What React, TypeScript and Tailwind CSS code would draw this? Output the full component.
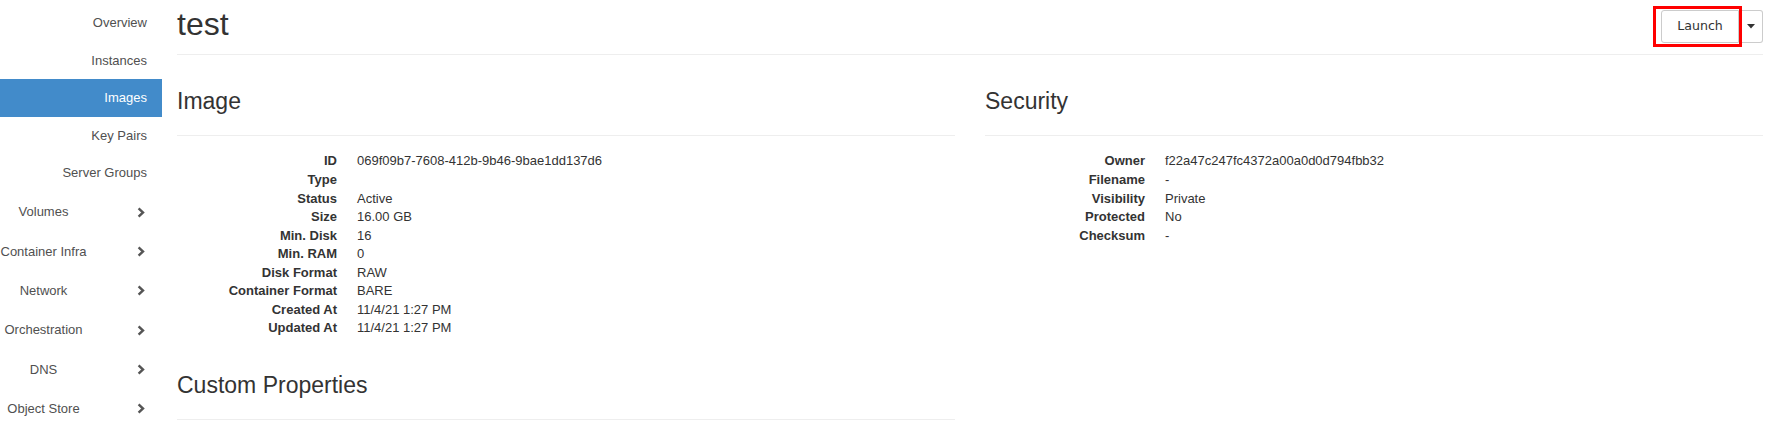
import React from 'react';

const topItems = ['Overview', 'Instances', 'Images', 'Key Pairs', 'Server Groups'];
const groups = ['Volumes', 'Container Infra', 'Network', 'Orchestration', 'DNS', 'Object Store'];

const imageRows: [string, string][] = [
  ['ID', '069f09b7-7608-412b-9b46-9bae1dd137d6'],
  ['Type', ''],
  ['Status', 'Active'],
  ['Size', '16.00 GB'],
  ['Min. Disk', '16'],
  ['Min. RAM', '0'],
  ['Disk Format', 'RAW'],
  ['Container Format', 'BARE'],
  ['Created At', '11/4/21 1:27 PM'],
  ['Updated At', '11/4/21 1:27 PM'],
];

const securityRows: [string, string][] = [
  ['Owner', 'f22a47c247fc4372a00a0d0d794fbb32'],
  ['Filename', '-'],
  ['Visibility', 'Private'],
  ['Protected', 'No'],
  ['Checksum', '-'],
];

function Chevron() {
  return (
    <svg width="8" height="11" viewBox="0 0 8 11" className="ml-[50px] shrink-0">
      <path d="M1.6 1.4 L6 5.5 L1.6 9.6" fill="none" stroke="#555" strokeWidth="2.4" />
    </svg>
  );
}

function Sidebar() {
  return (
    <nav className="w-[162px] shrink-0 pt-[4px] text-[13px] text-[#505050]">
      {topItems.map((item) => (
        <div
          key={item}
          className={
            item === 'Images'
              ? 'h-[37.5px] flex items-center justify-end pr-[15px] bg-[#428bca] text-white'
              : 'h-[37.5px] flex items-center justify-end pr-[15px]'
          }
        >
          {item}
        </div>
      ))}
      <div className="mt-[1px]">
        {groups.map((g) => (
          <div key={g} className="h-[39.3px] flex items-center">
            <span className="w-[87px] text-center whitespace-nowrap">{g}</span>
            <Chevron />
          </div>
        ))}
      </div>
    </nav>
  );
}

function Section({ title, rows, className }: { title: string; rows?: [string, string][]; className?: string }) {
  return (
    <div className={className}>
      <h3 className="text-[23px] leading-[25px] text-[#333]">{title}</h3>
      <div className="mt-[21px] border-t border-[#eee]" />
      {rows && (
        <dl className="mt-[16.4px] grid grid-cols-[160px_1fr] gap-x-[20px] text-[13px] leading-[18.57px] text-[#333]">
          {rows.map(([k, v]) => (
            <React.Fragment key={k}>
              <dt className="text-right font-bold whitespace-nowrap">{k}</dt>
              <dd>{v}</dd>
            </React.Fragment>
          ))}
        </dl>
      )}
    </div>
  );
}

export default function App() {
  return (
    <div className="flex h-[429px] overflow-hidden bg-white" style={{ fontFamily: '"Liberation Sans", Arial, sans-serif' }}>
      <Sidebar />
      <main className="flex-1 pl-[15px] pr-[9px]">
        {/* page header */}
        <div className="flex justify-between items-start h-[55px] border-b border-[#eee]">
          <h1 className="mt-[7px] text-[32px] leading-[35px] text-[#333]">test</h1>
          <div className="mt-[10px] flex">
            <div className="relative">
              <button
                className="h-[33px] w-[78px] border border-[#ccc] rounded-l-[3px] bg-white text-[12.6px] text-[#333]"
                style={{ fontFamily: '"DejaVu Sans", sans-serif' }}
              >
                Launch
              </button>
              <span className="absolute left-[-8px] top-[-4px] w-[89px] h-[41px] border-[3px] border-[#ff0000] pointer-events-none" />
            </div>
            <button className="h-[33px] w-[24px] border border-l-0 border-[#ccc] rounded-r-[3px] bg-white flex items-center justify-center">
              <svg width="8" height="5" viewBox="0 0 8 5">
                <path d="M0 0 L8 0 L4 4.5 Z" fill="#333" />
              </svg>
            </button>
          </div>
        </div>

        <div className="grid grid-cols-2 gap-x-[30px]">
          <div>
            <Section title="Image" rows={imageRows} className="mt-[34px]" />
            <Section title="Custom Properties" className="mt-[34.5px]" />
          </div>
          <div>
            <Section title="Security" rows={securityRows} className="mt-[34px]" />
          </div>
        </div>
      </main>
    </div>
  );
}
